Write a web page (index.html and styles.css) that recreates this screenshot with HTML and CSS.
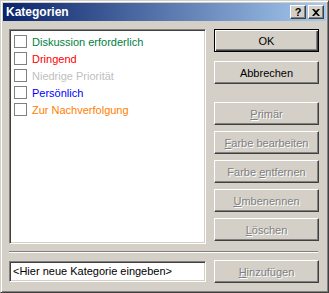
FILE: index.html
```html
<!DOCTYPE html>
<html lang="de">
<head>
  <meta charset="UTF-8" />
  <title>Kategorien</title>
  <link rel="stylesheet" href="styles.css">
</head>
<body>
  <div class="window">
    <div class="titlebar">
      <span class="title">Kategorien</span>
      <div class="caption-buttons">
        <button class="cap-btn help">?</button>
        <button class="cap-btn close">
          <svg width="8" height="7" viewBox="0 0 8 7"><path d="M0 0h2l2 2 2-2h2L5 3.5 8 7H6L4 5 2 7H0l3-3.5z" fill="#000"/></svg>
        </button>
      </div>
    </div>

    <div class="content">
      <div class="main">
        <div class="listbox">
          <div class="item"><span class="check"></span><span class="green">Diskussion erforderlich</span></div>
          <div class="item"><span class="check"></span><span class="red">Dringend</span></div>
          <div class="item"><span class="check"></span><span class="silver">Niedrige Priorität</span></div>
          <div class="item"><span class="check"></span><span class="blue">Persönlich</span></div>
          <div class="item"><span class="check"></span><span class="orange">Zur Nachverfolgung</span></div>
        </div>
        <div class="buttons">
          <button class="btn default">OK</button>
          <button class="btn">Abbrechen</button>
          <div class="group">
            <button class="btn disabled"><u>P</u>rimär</button>
            <button class="btn disabled"><u>F</u>arbe bearbeiten</button>
            <button class="btn disabled">Farbe <u>e</u>ntfernen</button>
            <button class="btn disabled"><u>U</u>mbenennen</button>
            <button class="btn disabled"><u>L</u>öschen</button>
          </div>
        </div>
      </div>

      <div class="separator"></div>

      <div class="add-row">
        <div class="textbox">&lt;Hier neue Kategorie eingeben&gt;</div>
        <button class="btn disabled"><u>H</u>inzufügen</button>
      </div>
    </div>
  </div>
</body>
</html>
```

FILE: styles.css
```css
body { margin: 0; font-family: "Liberation Sans", Arial, sans-serif; font-size: 11px; }

.window {
  width: 329px; height: 293px; box-sizing: border-box;
  background: #d4d0c8;
  border: 1px solid; border-color: #d4d0c8 #404040 #404040 #d4d0c8;
  box-shadow: inset 1px 1px #fff, inset -1px -1px #808080;
  padding: 2px;
  display: flex; flex-direction: column;
}

.titlebar {
  height: 18px; display: flex; align-items: center; justify-content: space-between;
  background: linear-gradient(to right, #0a246a, #a6caf0);
  padding: 0 2px 0 3px;
}
.title { color: #fff; font-weight: bold; font-size: 12px; }
.caption-buttons { display: flex; gap: 2px; }
.cap-btn {
  width: 16px; height: 14px; padding: 0; margin: 0;
  background: #d4d0c8; border: 1px solid; border-color: #fff #404040 #404040 #fff;
  box-shadow: inset -1px -1px #808080;
  display: flex; align-items: center; justify-content: center;
  font: bold 11px "Liberation Sans", Arial, sans-serif; color: #000;
}

.content { flex: 1; padding: 8px 7px 0 6px; display: flex; flex-direction: column; }
.main { display: flex; justify-content: space-between; }

.listbox {
  width: 197px; height: 215px; box-sizing: border-box;
  background: #fff;
  border: 1px solid; border-color: #808080 #fff #fff #808080;
  box-shadow: inset 1px 1px #404040, inset -1px -1px #d4d0c8;
  padding: 5px 4px;
  display: flex; flex-direction: column; gap: 4px;
}
.item { display: flex; align-items: center; gap: 5px; height: 13px; }
.check { width: 11px; height: 11px; border: 1px solid #808080; background: #fff; }
.green { color: #008040; }
.red { color: #ff0000; }
.silver { color: #c0c0c0; }
.blue { color: #0000ff; }
.orange { color: #ff8000; }

.buttons { display: flex; flex-direction: column; gap: 9px; }
.group { margin-top: 9px; display: flex; flex-direction: column; gap: 6px; }

.btn {
  width: 105px; height: 23px; margin: 0; padding: 0;
  background: #d4d0c8; border: 1px solid; border-color: #fff #404040 #404040 #fff;
  box-shadow: inset -1px -1px #808080;
  font: 11px "Liberation Sans", Arial, sans-serif; color: #000;
}
.btn.default { border-color: #000; box-shadow: inset 1px 1px #fff, inset -1px -1px #404040, inset -2px -2px #808080; }
.btn.disabled { color: #808080; text-shadow: 1px 1px 0 #fff; }

.separator { margin: 7px 1px 0 0; height: 1px; background: #808080; border-bottom: 1px solid #fff; }

.add-row { margin-top: 7px; display: flex; justify-content: space-between; align-items: center; }
.textbox {
  width: 197px; height: 21px; box-sizing: border-box;
  background: #fff;
  border: 1px solid; border-color: #808080 #fff #fff #808080;
  box-shadow: inset 1px 1px #404040, inset -1px -1px #d4d0c8;
  padding: 3px 3px; line-height: 13px;
}
```
